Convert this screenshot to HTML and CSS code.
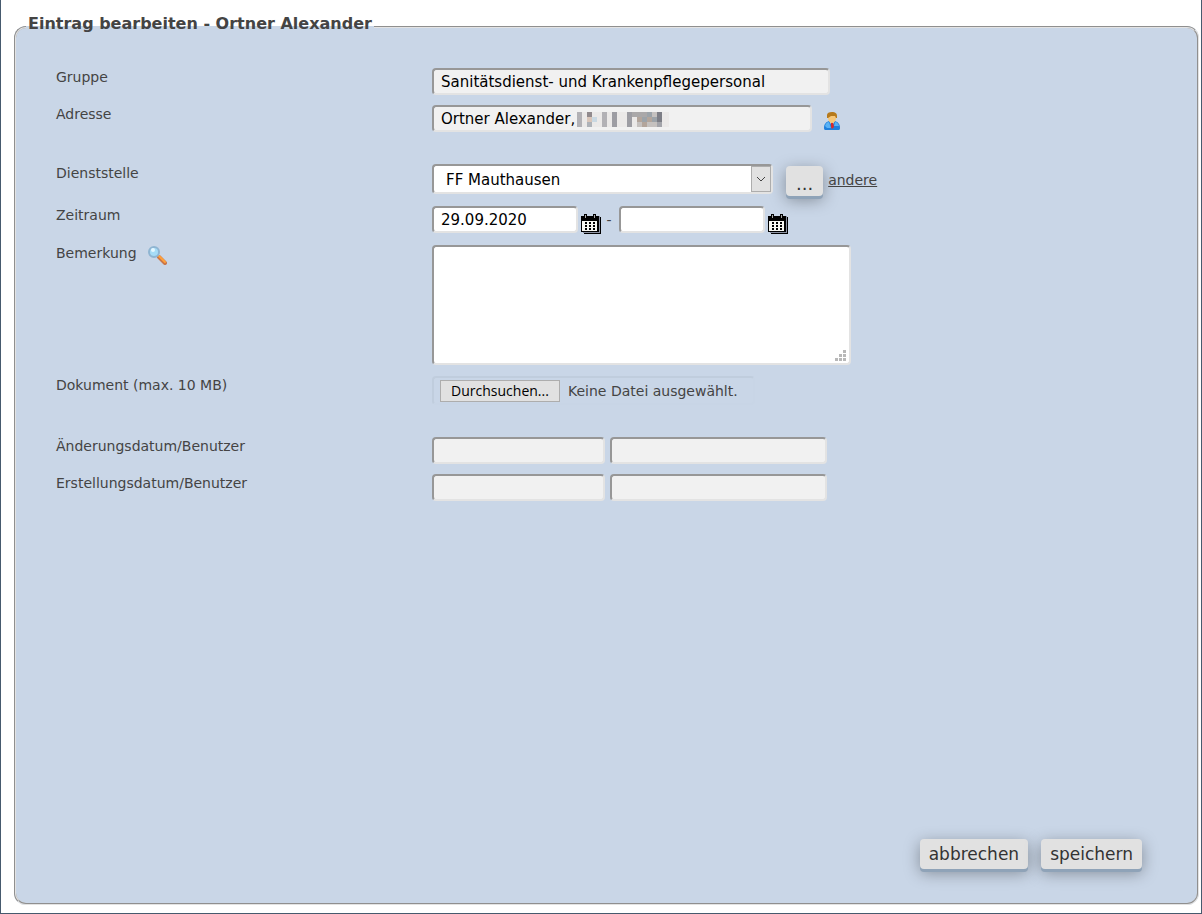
FILE: index.html
```html
<!DOCTYPE html>
<html lang="de">
<head>
    <meta charset="UTF-8">
    <meta name="viewport" content="width=device-width, initial-scale=1.0">
    <title>Eintrag bearbeiten - Ortner Alexander</title>
    <link rel="stylesheet" href="styles.css">
</head>
<body>
    <form class="page">
        <fieldset class="entry">
            <legend>Eintrag bearbeiten - Ortner Alexander</legend>

            <div class="row">
                <label class="caption" for="gruppe">Gruppe</label>
                <input class="field group-name" id="gruppe" type="text" value="Sanitätsdienst- und Krankenpflegepersonal" readonly>
            </div>
            <div class="row">
                <label class="caption" for="adresse">Adresse</label>
                <div class="address-box">
                    <input class="field address" id="adresse" type="text" value="Ortner Alexander, " readonly>
                    <svg class="mosaic" width="92" height="15" viewBox="3 0 92 15" shape-rendering="crispEdges" aria-hidden="true">
                        <path fill="#e5e1df" d="M3 0h92v15H3z" opacity=".5"/>
                        <path fill="#b2b1b5" d="M3 0h5v15H3zM28 0h5v15h-5z"/>
                        <path fill="#9d9da3" d="M38 0h5v15h-5zM53 0h5v15h-5z"/>
                        <path fill="#918a8d" d="M13 0h5v5h-5z"/>
                        <path fill="#d9c6ba" d="M13 5h5v5h-5z"/>
                        <path fill="#aeb2b8" d="M13 10h5v5h-5z"/>
                        <path fill="#c9d8e2" d="M18 5h5v5h-5zM83 5h5v5h-5z"/>
                        <path fill="#aaa8a9" d="M58 0h5v5h-5zM63 0h5v5h-5zM68 0h5v5h-5z"/>
                        <path fill="#b3a59b" d="M63 5h5v5h-5zM73 5h5v5h-5zM68 10h5v5h-5z"/>
                        <path fill="#9ca3a9" d="M68 5h5v5h-5zM73 0h5v5h-5zM78 5h5v5h-5z"/>
                        <path fill="#c5c1bf" d="M63 10h5v5h-5zM73 10h5v5h-5zM78 0h5v5h-5zM78 10h5v5h-5z"/>
                        <path fill="#7d7e86" d="M83 0h5v10h-5z"/>
                        <path fill="#a3a4aa" d="M83 10h5v5h-5z"/>
                    </svg>
                </div>
                <svg class="person" width="18" height="20" viewBox="0 0 18 20" aria-hidden="true">
                    <path fill="#1f7fdc" d="M1 17c0-4 2-6 5-7h6c3 1 5 3 5 7 0 2-1 2-2 2H3c-1 0-2 0-2-2z"/>
                    <path fill="#59b2f5" d="M2 15c1-3 2-4 4-4l2 6H4zM16 15c-1-3-2-4-4-4l-1 4z"/>
                    <path fill="#d5e8f8" d="M7 11h4l-2 5z"/>
                    <path fill="#d82b2b" d="M8 11h2l1 5-2 2-1-2z"/>
                    <path fill="#f7c779" d="M5 4h8v3c0 3-2 5-4 5S5 10 5 7z"/>
                    <path fill="#b67a1c" d="M4 7V4c0-2 2-3 5-3s5 1 5 4v2h-1l-1-2H8L5 7z"/>
                </svg>
            </div>

            <div class="row group">
                <label class="caption" for="dienststelle">Dienststelle</label>
                <div class="select-box">
                    <select class="field station" id="dienststelle">
                        <option>FF Mauthausen</option>
                    </select>
                    <span class="arrow">
                        <svg width="10" height="6" viewBox="0 0 10 6" aria-hidden="true"><path d="M1 1l4 4 4-4" fill="none" stroke="#444"/></svg>
                    </span>
                </div>
                <button class="btn more" type="button">...</button>
                <a class="other" href="#">andere</a>
            </div>
            <div class="row">
                <label class="caption" for="von">Zeitraum</label>
                <input class="field date" id="von" type="text" value="29.09.2020">
                <svg class="calendar" width="20" height="21" viewBox="0 0 20 21" shape-rendering="crispEdges" aria-hidden="true">
                    <path d="M3 4h17v17H3z"/>
                    <path fill="#8d93a3" d="M2 3h17v17H2z"/>
                    <path d="M0 3h18v16H0zM3 1h3v3H3zM12 1h3v3h-3z"/>
                    <path fill="#f7f7f2" d="M1 8h15v10H1z"/>
                    <path fill="#aaa" d="M4 2h1v3H4zM13 2h1v3h-1z"/>
                    <path d="M4 9h2v2H4zM8 9h2v2H8zM12 9h2v2h-2zM4 12h2v2H4zM8 12h2v2H8zM12 12h2v2h-2zM4 15h2v2H4zM8 15h2v2H8zM12 15h2v2h-2z"/>
                </svg>
                <span class="dash">-</span>
                <input class="field date" type="text" aria-label="Zeitraum bis">
                <svg class="calendar" width="20" height="21" viewBox="0 0 20 21" shape-rendering="crispEdges" aria-hidden="true">
                    <path d="M3 4h17v17H3z"/>
                    <path fill="#8d93a3" d="M2 3h17v17H2z"/>
                    <path d="M0 3h18v16H0zM3 1h3v3H3zM12 1h3v3h-3z"/>
                    <path fill="#f7f7f2" d="M1 8h15v10H1z"/>
                    <path fill="#aaa" d="M4 2h1v3H4zM13 2h1v3h-1z"/>
                    <path d="M4 9h2v2H4zM8 9h2v2H8zM12 9h2v2h-2zM4 12h2v2H4zM8 12h2v2H8zM12 12h2v2h-2zM4 15h2v2H4zM8 15h2v2H8zM12 15h2v2h-2z"/>
                </svg>
            </div>
            <div class="row">
                <label class="caption with-icon" for="bemerkung">
                    Bemerkung
                    <svg width="20" height="20" viewBox="0 0 20 20" aria-hidden="true">
                        <path d="M12 12l6 6" stroke="#c9764a" stroke-width="4" stroke-linecap="round"/>
                        <path d="M12 11l6 6" stroke="#ffa13b" stroke-width="2" stroke-linecap="round"/>
                        <circle cx="7" cy="7" r="5" fill="#a6dcf7" stroke="#8fb5d2" stroke-width="2"/>
                        <circle cx="6" cy="5" r="2" fill="#e4f7ff"/>
                    </svg>
                </label>
                <div class="note-box">
                    <textarea class="field note" id="bemerkung"></textarea>
                    <svg class="grip" width="11" height="11" viewBox="0 0 11 11" shape-rendering="crispEdges" aria-hidden="true">
                        <path fill="#b8b8b8" d="M8 0h3v3H8zM4 4h3v3H4zM8 4h3v3H8zM0 8h3v3H0zM4 8h3v3H4zM8 8h3v3H8z"/>
                    </svg>
                </div>
            </div>
            <div class="row">
                <label class="caption" for="dokument">Dokument (max. 10 MB)</label>
                <div class="file-box">
                    <input class="file-input" id="dokument" type="file">
                    <button class="browse" type="button">Durchsuchen...</button>
                    <span>Keine Datei ausgewählt.</span>
                </div>
            </div>

            <div class="row group">
                <label class="caption" for="aenderung">Änderungsdatum/Benutzer</label>
                <input class="field stamp" id="aenderung" type="text" readonly>
                <input class="field user" type="text" aria-label="Änderung Benutzer" readonly>
            </div>
            <div class="row">
                <label class="caption" for="erstellung">Erstellungsdatum/Benutzer</label>
                <input class="field stamp" id="erstellung" type="text" readonly>
                <input class="field user" type="text" aria-label="Erstellung Benutzer" readonly>
            </div>

            <div class="actions">
                <button class="btn" type="button">abbrechen</button>
                <button class="btn" type="submit">speichern</button>
            </div>
        </fieldset>
    </form>
    <script>
        const fileInput = document.querySelector('.file-input');

        document.querySelector('.browse').addEventListener('click', () => {
            fileInput.click();
        });

        fileInput.addEventListener('change', () => {
            if (fileInput.files.length) {
                document.querySelector('.file-box span').textContent = fileInput.files[0].name;
            }
        });
    </script>
</body>
</html>
```
FILE: styles.css
```css
* {
    box-sizing: border-box;
}
body {
    margin: 0;
    background-color: #fff;
    color: #444;
    font-family: Verdana, "DejaVu Sans", sans-serif;
    font-size: 14px;
}
.page {
    display: flex;
    min-height: 100vh;
    padding: 14px 2px 8px 13px;
    border: 1px solid #465a6e;
    border-top: 0;
}
.entry {
    flex: 1;
    display: flex;
    flex-direction: column;
    gap: 10px;
    min-width: 0;
    margin: 0;
    padding: 28px 55px 34px 40px;
    border: 2px groove #e3e3e3;
    border-radius: 12px;
    background-color: #c9d6e7;
}
legend {
    margin-left: -30px;
    padding: 0 2px 6px;
    font-size: 16px;
    font-weight: bold;
    line-height: 20px;
}
.row {
    display: flex;
    align-items: flex-start;
}
.group {
    margin-top: 22px;
}
.caption {
    flex: none;
    width: 376px;
    line-height: 18px;
}
.with-icon {
    display: flex;
    gap: 10px;
    line-height: 16px;
}
.field {
    display: block;
    height: 27px;
    margin: 0;
    padding: 0 7px;
    border: 2px solid;
    border-color: #979797 #e3e3e3 #e3e3e3 #979797;
    border-radius: 4px;
    background-color: #fff;
    color: #000;
    font-family: inherit;
    font-size: 15px;
    outline: none;
}
.field[readonly] {
    background-color: #f1f1f1;
}
.group-name {
    width: 398px;
}
.address-box,
.select-box,
.note-box {
    position: relative;
}
.address {
    width: 380px;
}
.mosaic {
    position: absolute;
    top: 7px;
    left: 145px;
}
.person {
    margin: 6px 0 0 11px;
}
.station {
    width: 341px;
    height: 30px;
    padding: 2px 12px 0;
    appearance: none;
}
.arrow {
    position: absolute;
    top: 2px;
    right: 2px;
    bottom: 2px;
    display: flex;
    align-items: center;
    justify-content: center;
    width: 20px;
    border: 1px solid #adadad;
    background-color: #e1e1e1;
    pointer-events: none;
}
.btn {
    height: 30px;
    padding: 0 9px;
    border: 0;
    border-radius: 4px;
    background-color: #e1e1e1;
    box-shadow: 0 3px 0 #8fa3b8, 0 4px 16px rgba(0, 0, 0, 0.35);
    color: #333;
    font-family: inherit;
    font-size: 17px;
    line-height: 28px;
    cursor: pointer;
}
.more {
    margin: 2px 5px 0 13px;
    padding: 6px 10px 0;
    font-size: 18px;
    line-height: 24px;
}
.other {
    color: #444;
    line-height: 32px;
}
.date {
    width: 146px;
    padding-top: 1px;
}
.calendar {
    margin: 7px 0 1px 3px;
}
.dash {
    width: 18px;
    padding-right: 2px;
    line-height: 28px;
    text-align: center;
}
.note-box {
    margin-bottom: 1px;
}
.note {
    width: 419px;
    height: 120px;
    padding: 4px 7px;
    resize: none;
}
.grip {
    position: absolute;
    right: 5px;
    bottom: 4px;
}
.file-box {
    display: flex;
    align-items: center;
    gap: 8px;
    width: 323px;
    height: 29px;
    padding: 0 6px;
    border: 2px solid;
    border-color: #c0cddd #c8d5e6 #c8d5e6 #c0cddd;
    border-radius: 4px;
}
.file-input {
    display: none;
}
.browse {
    width: 120px;
    height: 22px;
    padding: 0;
    border: 1px solid #adadad;
    background-color: #e1e1e1;
    color: #000;
    font-family: "Open Sans", sans-serif;
    font-size: 14px;
    line-height: 20px;
}
.stamp {
    width: 173px;
    margin-right: 5px;
}
.user {
    width: 217px;
}
.actions {
    display: flex;
    justify-content: flex-end;
    gap: 13px;
    margin-top: auto;
}
```
